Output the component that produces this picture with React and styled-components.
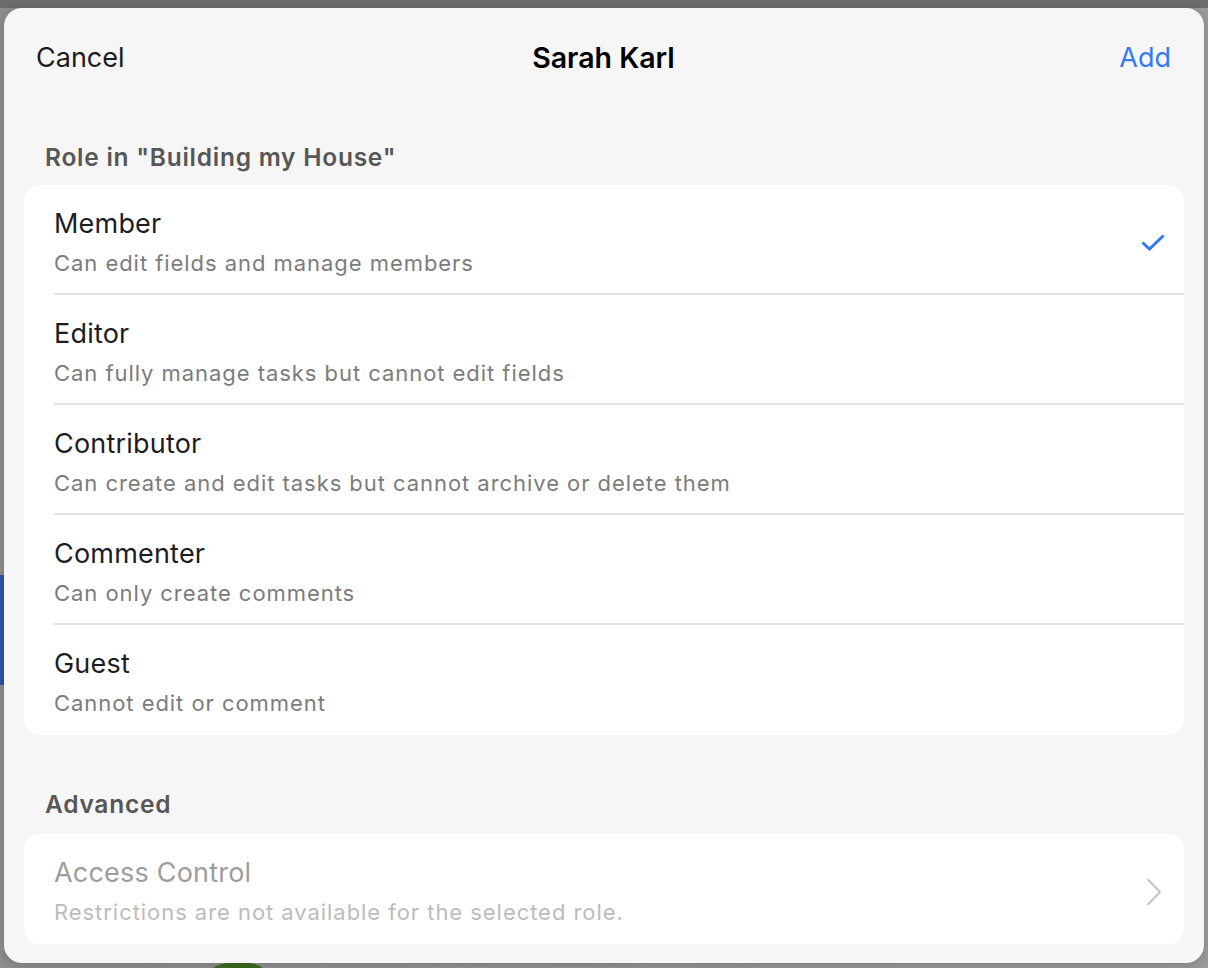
import React from "react";
import styled, { createGlobalStyle } from "styled-components";

const Global = createGlobalStyle`
  html, body { margin: 0; padding: 0; }
  body {
    font-family: Inter, "Noto Sans", "Liberation Sans", sans-serif;
    background: #919191;
    -webkit-font-smoothing: antialiased;
  }
`;

const Backdrop = styled.div`
  width: 1208px;
  height: 968px;
  box-sizing: border-box;
  padding: 8px 4px 5px 4px;
  display: flex;
  background:
    linear-gradient(#6b6b6b, #6b6b6b) 0 0 / 100% 8px no-repeat,
    linear-gradient(#2b55a6, #2b55a6) 0 575px / 4px 110px no-repeat,
    radial-gradient(ellipse 28px 10px at 238px 972px, #3d6b1f 95%, transparent 100%) no-repeat,
    linear-gradient(90deg, #8d8d8d 0, #939393 50%, #9a9a9a 100%);
`;

const Sheet = styled.div`
  flex: 1;
  display: flex;
  flex-direction: column;
  background: #f6f6f6;
  border-radius: 18px;
  box-shadow: 0 2px 8px rgba(0, 0, 0, 0.18);
  overflow: hidden;
`;

const Header = styled.header`
  height: 100px;
  display: grid;
  grid-template-columns: 1fr auto 1fr;
  align-items: center;
  padding: 0 33px 0 32px;
`;

const HeaderButton = styled.span`
  font-size: 27px;
  line-height: 34px;
  color: ${(p) => (p.$primary ? "#3478f6" : "#1c1c1e")};
  justify-self: ${(p) => (p.$end ? "end" : "start")};
`;

const Title = styled.h1`
  margin: 0;
  font-size: 28.5px;
  line-height: 34px;
  font-weight: 600;
  color: #000;
`;

const Content = styled.div`
  display: flex;
  flex-direction: column;
  padding: 0 20px;
`;

const SectionLabel = styled.h2`
  margin: ${(p) => p.$top}px 0 ${(p) => p.$bottom}px 21px;
  font-size: 24.5px;
  line-height: 30px;
  font-weight: 600;
  letter-spacing: 0.75px;
  color: #575757;
`;

const Card = styled.div`
  background: #fff;
  border-radius: 16px;
  display: flex;
  flex-direction: column;
  overflow: hidden;
`;

const Row = styled.div`
  display: flex;
  padding-left: 30px;
`;

const RowInner = styled.div`
  flex: 1;
  display: flex;
  align-items: center;
  padding: 22px ${(p) => p.$pr}px ${(p) => (p.$last ? 17 : 15)}px 0;
  border-bottom: ${(p) => (p.$last ? "none" : "2px solid #e4e4e4")};
`;

const Texts = styled.div`
  flex: 1;
  display: flex;
  flex-direction: column;
  gap: 7px;
`;

const RowTitle = styled.div`
  font-size: 27px;
  line-height: 34px;
  letter-spacing: 0.2px;
  color: ${(p) => (p.$disabled ? "#9d9d9d" : "#1d1d1f")};
`;

const RowSub = styled.div`
  font-size: 22px;
  line-height: 30px;
  letter-spacing: 0.95px;
  color: ${(p) => (p.$disabled ? "#bcbcbc" : "#7c7c7c")};
`;

const Check = () => (
  <svg width="24" height="18" viewBox="0 0 24 18" fill="none">
    <path d="M2.5 9.5 L8.5 15 L21.5 2.5" stroke="#3478f6" strokeWidth="3" strokeLinecap="square" />
  </svg>
);

const Chevron = () => (
  <svg width="16" height="28" viewBox="0 0 16 28" fill="none">
    <path d="M2 1.5 L14 14 L2 26.5" stroke="#c4c4c4" strokeWidth="2" strokeLinecap="round" strokeLinejoin="round" />
  </svg>
);

const roles = [
  { title: "Member", sub: "Can edit fields and manage members", selected: true },
  { title: "Editor", sub: "Can fully manage tasks but cannot edit fields" },
  { title: "Contributor", sub: "Can create and edit tasks but cannot archive or delete them" },
  { title: "Commenter", sub: "Can only create comments" },
  { title: "Guest", sub: "Cannot edit or comment" },
];

export default function App() {
  return (
    <>
      <Global />
      <Backdrop>
        <Sheet>
          <Header>
            <HeaderButton>Cancel</HeaderButton>
            <Title>Sarah Karl</Title>
            <HeaderButton $primary $end>Add</HeaderButton>
          </Header>
          <Content>
            <SectionLabel $top={34} $bottom={13}>Role in "Building my House"</SectionLabel>
            <Card>
              {roles.map((r, i) => (
                <Row key={r.title}>
                  <RowInner $last={i === roles.length - 1} $pr={19}>
                    <Texts>
                      <RowTitle>{r.title}</RowTitle>
                      <RowSub>{r.sub}</RowSub>
                    </Texts>
                    {r.selected && <Check />}
                  </RowInner>
                </Row>
              ))}
            </Card>
            <SectionLabel $top={54} $bottom={15}>Advanced</SectionLabel>
            <Card>
              <Row>
                <RowInner $last $pr={22}>
                  <Texts>
                    <RowTitle $disabled>Access Control</RowTitle>
                    <RowSub $disabled>Restrictions are not available for the selected role.</RowSub>
                  </Texts>
                  <Chevron />
                </RowInner>
              </Row>
            </Card>
          </Content>
        </Sheet>
      </Backdrop>
    </>
  );
}
